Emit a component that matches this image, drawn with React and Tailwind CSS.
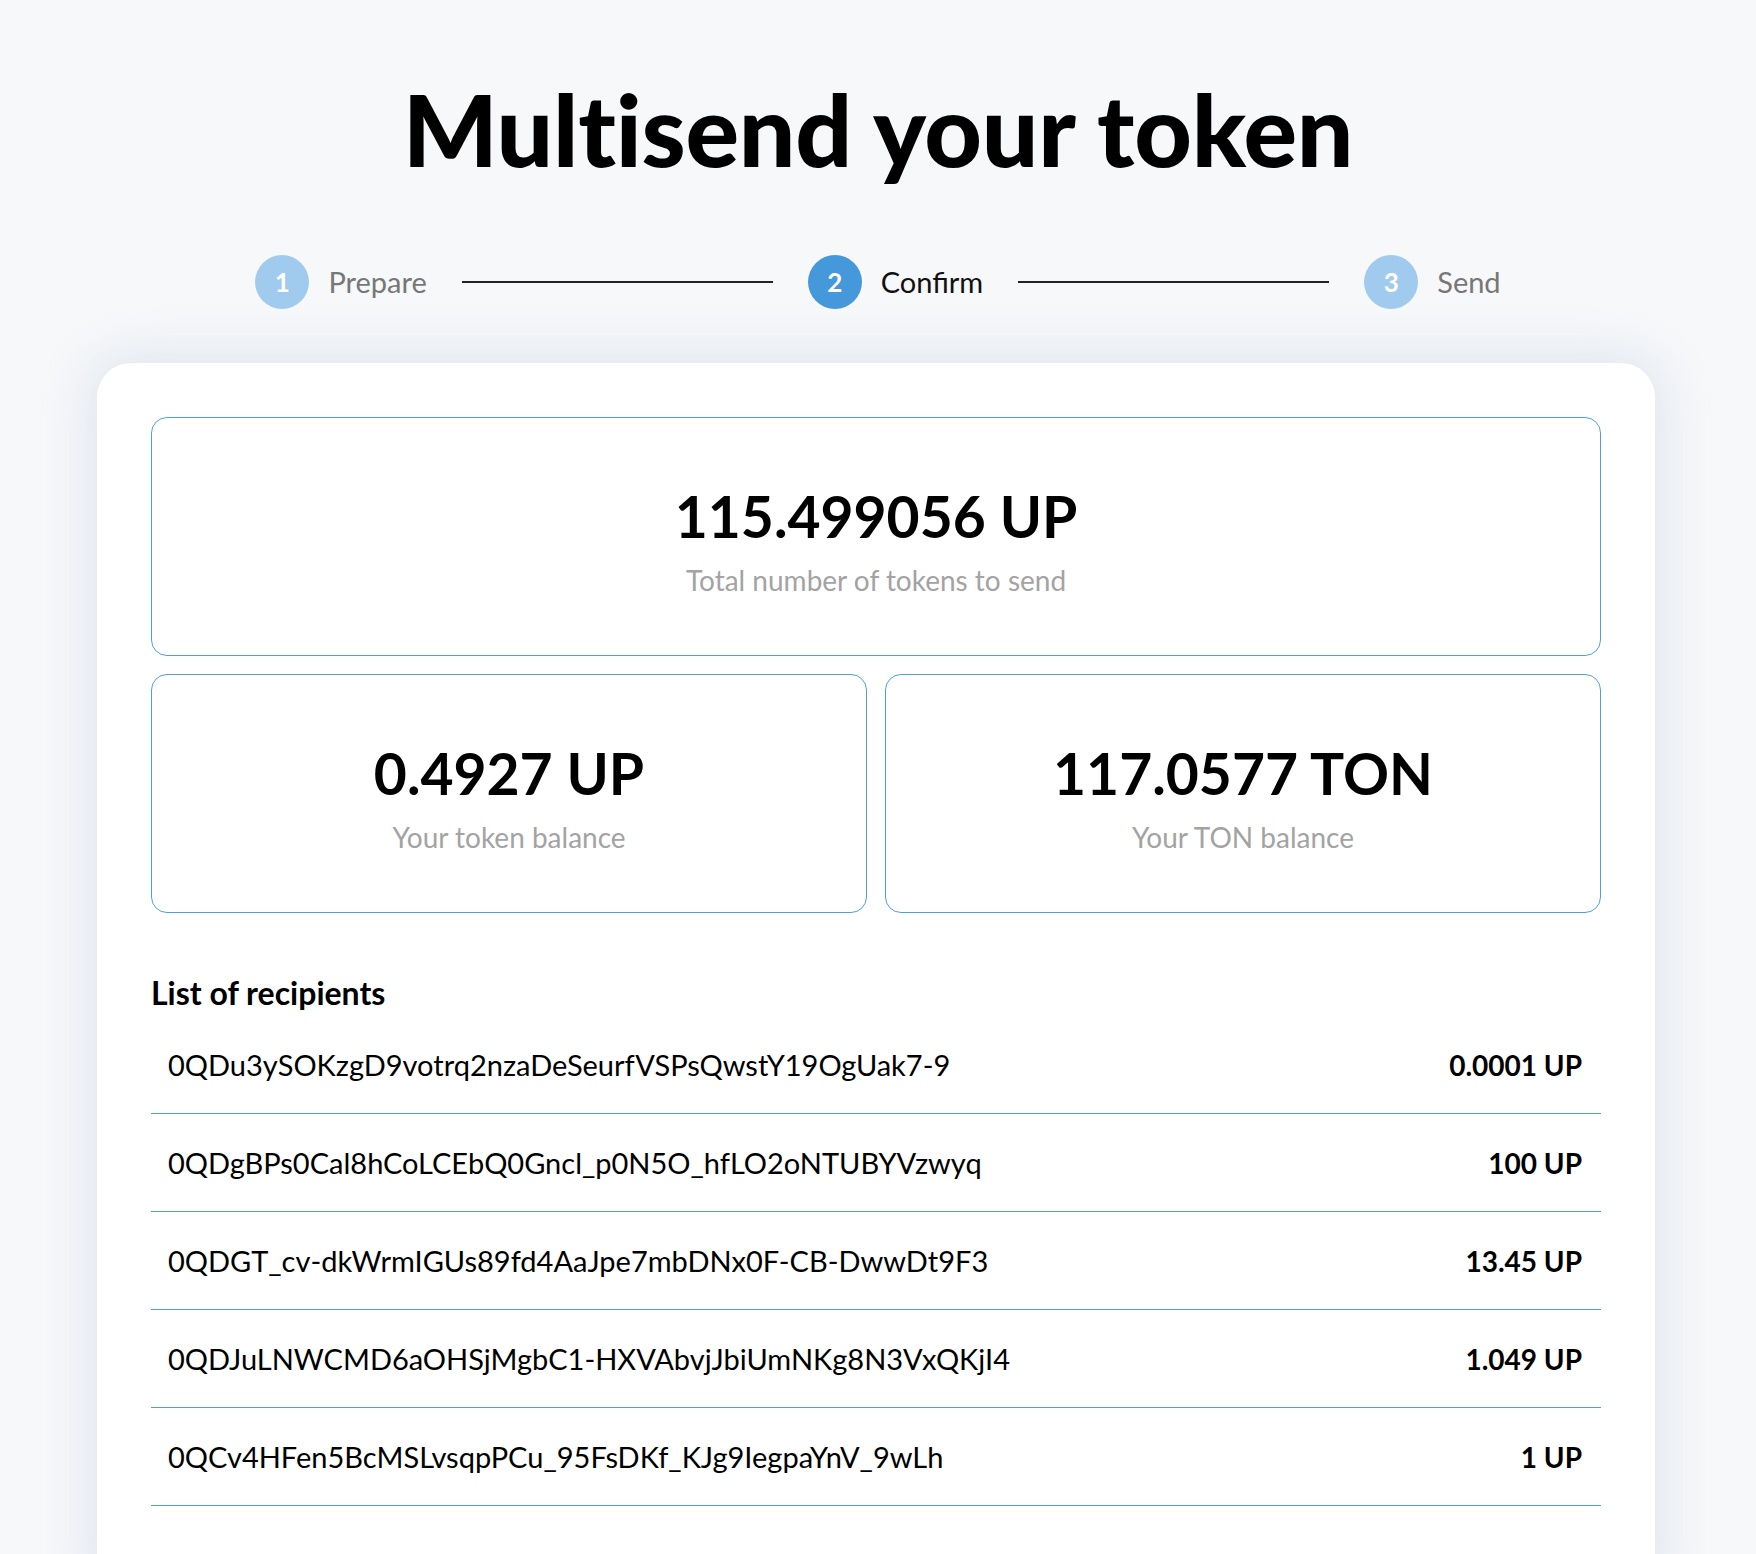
const steps = [
  { n: 1, label: 'Prepare', active: false },
  { n: 2, label: 'Confirm', active: true },
  { n: 3, label: 'Send', active: false },
]

const recipients = [
  ['0QDu3ySOKzgD9votrq2nzaDeSeurfVSPsQwstY19OgUak7-9', '0.0001 UP'],
  ['0QDgBPs0Cal8hCoLCEbQ0Gncl_p0N5O_hfLO2oNTUBYVzwyq', '100 UP'],
  ['0QDGT_cv-dkWrmIGUs89fd4AaJpe7mbDNx0F-CB-DwwDt9F3', '13.45 UP'],
  ['0QDJuLNWCMD6aOHSjMgbC1-HXVAbvjJbiUmNKg8N3VxQKjI4', '1.049 UP'],
  ['0QCv4HFen5BcMSLvsqpPCu_95FsDKf_KJg9IegpaYnV_9wLh', '1 UP'],
]

const Stat = ({ value, label }) => (
  <div className="flex flex-col items-center justify-center rounded-2xl border border-[#4f9fe0] h-[239px] pt-[9px]">
    <div className="text-[57px] font-bold leading-none text-black">{value}</div>
    <div className="mt-[21px] text-[28px] leading-none text-[#a3a3a3]">{label}</div>
  </div>
)

const App = () => {
  return (
    <div className="min-h-screen bg-[#f7f8fa] font-['Lato','Liberation_Sans',sans-serif] pt-[58px]">
      <h1 className="text-center text-[100px] font-black leading-[140px] tracking-[-0.25px] text-black">Multisend your token</h1>

      <div className="mt-[57px] flex items-center justify-center">
        {steps.map((s, i) => (
          <div key={s.n} className="flex items-center">
            {i > 0 && <div className="mx-[35px] h-[2px] w-[311px] bg-[#222]" />}
            <div className="flex items-center gap-[19px]">
              <div className={"flex h-[54px] w-[54px] items-center justify-center rounded-full text-[26px] font-bold text-white " + (s.active ? 'bg-[#4598da]' : 'bg-[#a0cbee]')}>{s.n}</div>
              <span className={"text-[29px] " + (s.active ? 'text-[#111]' : 'text-[#777]')}>{s.label}</span>
            </div>
          </div>
        ))}
      </div>

      <div className="ml-[97px] w-[1558px] mt-[54px] rounded-t-[34px] bg-white px-[54px] pt-[54px] pb-[80px] shadow-[0_0_50px_10px_rgba(210,218,230,0.6)]">
        <Stat value="115.499056 UP" label="Total number of tokens to send" />
        <div className="mt-[18px] grid grid-cols-2 gap-[18px]">
          <Stat value="0.4927 UP" label="Your token balance" />
          <Stat value="117.0577 TON" label="Your TON balance" />
        </div>

        <h2 className="mt-[62px] text-[32px] font-bold leading-[36px] text-black">List of recipients</h2>
        <div className="mt-[5px]">
          {recipients.map(([addr, amount]) => (
            <div key={addr} className="flex h-[98px] items-center justify-between border-b border-[#4f9fe0] pl-[17px] pr-[19px] text-black">
              <span className="text-[29px]">{addr}</span>
              <span className="text-[28px] font-bold">{amount}</span>
            </div>
          ))}
        </div>
      </div>
    </div>
  )
}

export default App
